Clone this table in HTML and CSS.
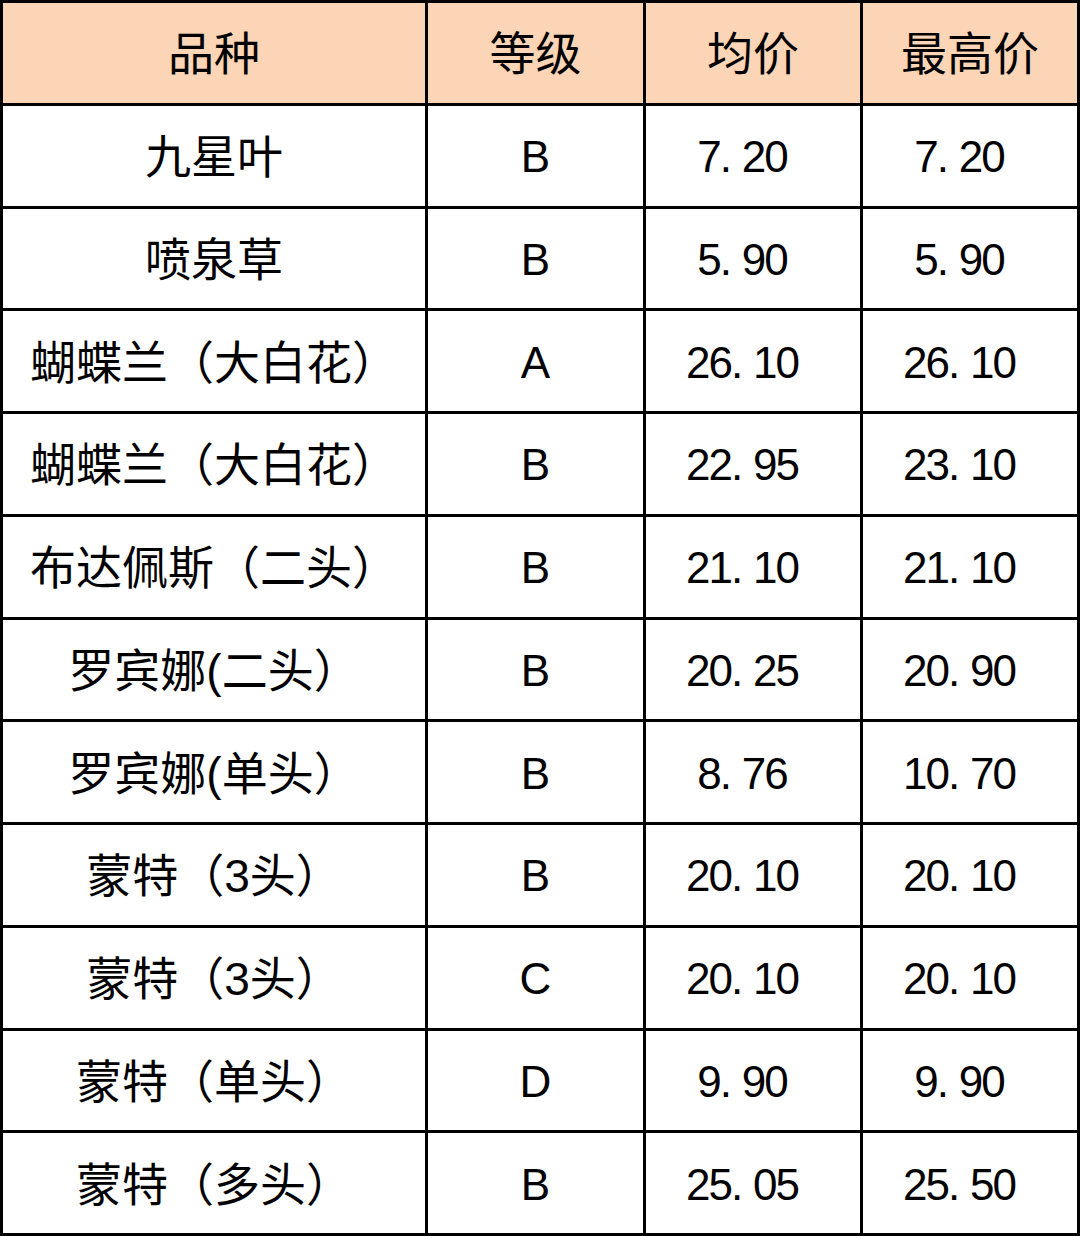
FILE: index.html
```html
<!DOCTYPE html>
<html lang="zh-CN">
<head>
<meta charset="utf-8">
<title>价格表</title>
<link rel="stylesheet" href="styles.css">
</head>
<body>
<div class="table">
  <div class="cell head">品种</div><div class="cell head">等级</div><div class="cell head">均价</div><div class="cell head">最高价</div>
  <div class="cell">九星叶</div><div class="cell grade">B</div><div class="cell num">7<span class="dot">.</span>20</div><div class="cell num">7<span class="dot">.</span>20</div>
  <div class="cell">喷泉草</div><div class="cell grade">B</div><div class="cell num">5<span class="dot">.</span>90</div><div class="cell num">5<span class="dot">.</span>90</div>
  <div class="cell">蝴蝶兰（大白花）</div><div class="cell grade">A</div><div class="cell num">26<span class="dot">.</span>10</div><div class="cell num">26<span class="dot">.</span>10</div>
  <div class="cell">蝴蝶兰（大白花）</div><div class="cell grade">B</div><div class="cell num">22<span class="dot">.</span>95</div><div class="cell num">23<span class="dot">.</span>10</div>
  <div class="cell">布达佩斯（二头）</div><div class="cell grade">B</div><div class="cell num">21<span class="dot">.</span>10</div><div class="cell num">21<span class="dot">.</span>10</div>
  <div class="cell">罗宾娜(二头）</div><div class="cell grade">B</div><div class="cell num">20<span class="dot">.</span>25</div><div class="cell num">20<span class="dot">.</span>90</div>
  <div class="cell">罗宾娜(单头）</div><div class="cell grade">B</div><div class="cell num">8<span class="dot">.</span>76</div><div class="cell num">10<span class="dot">.</span>70</div>
  <div class="cell">蒙特（3头）</div><div class="cell grade">B</div><div class="cell num">20<span class="dot">.</span>10</div><div class="cell num">20<span class="dot">.</span>10</div>
  <div class="cell">蒙特（3头）</div><div class="cell grade">C</div><div class="cell num">20<span class="dot">.</span>10</div><div class="cell num">20<span class="dot">.</span>10</div>
  <div class="cell">蒙特（单头）</div><div class="cell grade">D</div><div class="cell num">9<span class="dot">.</span>90</div><div class="cell num">9<span class="dot">.</span>90</div>
  <div class="cell">蒙特（多头）</div><div class="cell grade">B</div><div class="cell num">25<span class="dot">.</span>05</div><div class="cell num">25<span class="dot">.</span>50</div>
</div>
</body>
</html>
```
FILE: styles.css
```css
html, body {
  margin: 0;
  padding: 0;
  background: #fff;
}
.table {
  width: 1080px;
  height: 1236px;
  box-sizing: border-box;
  display: grid;
  grid-template-columns: 422px 215px 214px 214px;
  grid-template-rows: repeat(12, 1fr);
  gap: 3px;
  padding: 3px;
  background: #000;
  font-family: "Liberation Sans", "Noto Sans CJK SC", sans-serif;
  font-size: 46px;
  color: #000;
  text-spacing-trim: space-all;
}
.cell {
  background: #fff;
  display: flex;
  align-items: center;
  justify-content: center;
  padding-top: 3px;
  box-sizing: border-box;
  white-space: nowrap;
  line-height: 1;
}
.cell.head {
  background: #fbd5b5;
}
.grade {
  font-size: 44px;
}
.num {
  font-size: 44px;
  letter-spacing: -2px;
  padding-right: 22px;
}
.dot {
  display: inline-block;
  width: 22px;
}
```
